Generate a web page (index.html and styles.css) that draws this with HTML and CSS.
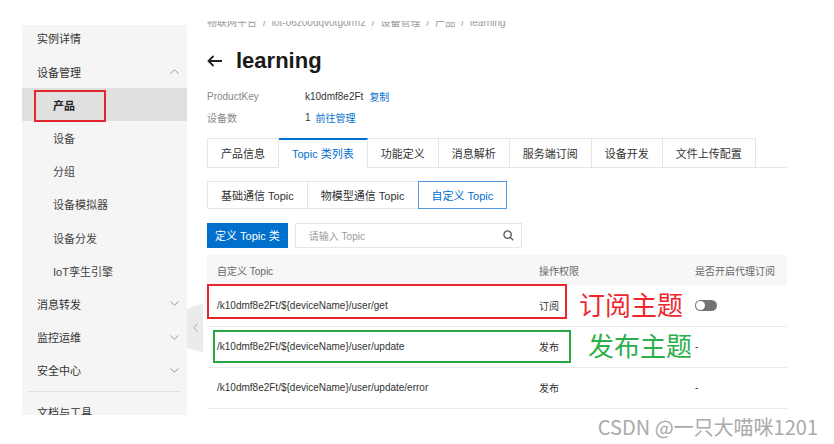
FILE: index.html
```html
<!DOCTYPE html>
<html lang="zh-CN">
<head>
    <meta charset="UTF-8">
    <title>learning - 产品详情</title>
    <link rel="stylesheet" href="styles.css">
</head>
<body>
    <div class="page">
        <aside class="sidebar">
            <div class="nav-item nav-first">实例详情</div>
            <div class="nav-item">设备管理
                <svg class="chev" width="9" height="5" viewBox="0 0 9 5"><path d="M0.5 4.5 L4.5 0.8 L8.5 4.5" /></svg>
            </div>
            <div class="nav-item nav-sub nav-active">产品<span class="mark-nav"></span></div>
            <div class="nav-item nav-sub">设备</div>
            <div class="nav-item nav-sub">分组</div>
            <div class="nav-item nav-sub">设备模拟器</div>
            <div class="nav-item nav-sub">设备分发</div>
            <div class="nav-item nav-sub">IoT孪生引擎</div>
            <div class="nav-item">消息转发
                <svg class="chev" width="9" height="5" viewBox="0 0 9 5"><path d="M0.5 0.5 L4.5 4.2 L8.5 0.5" /></svg>
            </div>
            <div class="nav-item">监控运维
                <svg class="chev" width="9" height="5" viewBox="0 0 9 5"><path d="M0.5 0.5 L4.5 4.2 L8.5 0.5" /></svg>
            </div>
            <div class="nav-item">安全中心
                <svg class="chev" width="9" height="5" viewBox="0 0 9 5"><path d="M0.5 0.5 L4.5 4.2 L8.5 0.5" /></svg>
            </div>
            <div class="nav-divider"></div>
            <div class="nav-item nav-last">文档与工具</div>
        </aside>

        <div class="collapse-tab">
            <svg width="5" height="9" viewBox="0 0 5 9"><path d="M4.5 0.5 L0.8 4.5 L4.5 8.5" /></svg>
        </div>

        <main class="content">
            <div class="crumbs">
                <span>物联网平台</span><span class="sep">/</span>
                <span>iot-06z00dqv0tgorm2</span><span class="sep">/</span>
                <span>设备管理</span><span class="sep">/</span>
                <span>产品</span><span class="sep">/</span>
                <span>learning</span>
            </div>

            <h1 class="title">
                <svg width="16" height="12" viewBox="0 0 16 12"><path d="M15 6 H1.5 M6.5 1 L1.5 6 L6.5 11" /></svg>
                learning
            </h1>

            <div class="info">
                <div class="info-row">
                    <span class="info-label">ProductKey</span>
                    <span class="info-value">k10dmf8e2Ft</span>
                    <a class="link">复制</a>
                </div>
                <div class="info-row">
                    <span class="info-label">设备数</span>
                    <span class="info-value">1</span>
                    <a class="link link-tight">前往管理</a>
                </div>
            </div>

            <div class="tabs">
                <div class="tab">产品信息</div>
                <div class="tab tab-active">Topic 类列表</div>
                <div class="tab">功能定义</div>
                <div class="tab">消息解析</div>
                <div class="tab">服务端订阅</div>
                <div class="tab">设备开发</div>
                <div class="tab">文件上传配置</div>
            </div>

            <div class="subtabs">
                <div class="subtab">基础通信 Topic</div>
                <div class="subtab">物模型通信 Topic</div>
                <div class="subtab subtab-active">自定义 Topic</div>
            </div>

            <div class="toolbar">
                <div class="btn">定义 Topic 类</div>
                <div class="search">
                    <span>请输入 Topic</span>
                    <svg width="11" height="11" viewBox="0 0 11 11"><circle cx="4.6" cy="4.6" r="3.7" /><path d="M7.4 7.4 L10.2 10.2" /></svg>
                </div>
            </div>

            <div class="table">
                <div class="thead">
                    <div class="cell-topic">自定义 Topic</div>
                    <div class="cell-perm">操作权限</div>
                    <div class="cell-proxy">是否开启代理订阅</div>
                </div>
                <div class="row">
                    <div class="cell-topic">/k10dmf8e2Ft/${deviceName}/user/get</div>
                    <div class="cell-perm">订阅<span class="note note-red">订阅主题</span></div>
                    <div class="cell-proxy"><span class="switch"></span></div>
                    <span class="mark mark-red"></span>
                </div>
                <div class="row">
                    <div class="cell-topic">/k10dmf8e2Ft/${deviceName}/user/update</div>
                    <div class="cell-perm">发布<span class="note note-green">发布主题</span></div>
                    <div class="cell-proxy">-</div>
                    <span class="mark mark-green"></span>
                </div>
                <div class="row">
                    <div class="cell-topic">/k10dmf8e2Ft/${deviceName}/user/update/error</div>
                    <div class="cell-perm">发布</div>
                    <div class="cell-proxy">-</div>
                </div>
            </div>
        </main>

        <div class="watermark">CSDN @一只大喵咪1201</div>
    </div>
</body>
</html>
```

FILE: styles.css
```css
/* Global */
body {
    margin: 0;
    background: #fff;
    color: #333;
    font-family: "Liberation Sans", "Noto Sans CJK SC", sans-serif;
}

.page {
    position: relative;
    display: flex;
    align-items: flex-start;
    height: 444px;
    overflow: hidden;
}

/* Sidebar */
.sidebar {
    flex-shrink: 0;
    width: 165px;
    height: 390px;
    margin: 25px 0 0 22px;
    overflow: hidden;
    background: #f5f5f5;
    font-size: 11px;
}

.nav-item {
    position: relative;
    box-sizing: border-box;
    height: 33.2px;
    padding: 0 8px 0 15px;
    display: flex;
    align-items: center;
    justify-content: space-between;
    color: #333;
}

.nav-first {
    height: 30px;
    padding-bottom: 4px;
}

.nav-sub {
    padding-left: 31px;
    color: #444;
}

.nav-active {
    background: #e0e0e0;
    font-weight: bold;
    color: #222;
}

.mark-nav {
    position: absolute;
    left: 12px;
    top: 2px;
    width: 72px;
    height: 32px;
    box-sizing: border-box;
    border: 2px solid #e3262e;
}

.chev path {
    fill: none;
    stroke: #999;
    stroke-width: 1;
}

.nav-divider {
    height: 1px;
    margin: 4px 6px 0;
    background: #e2e2e2;
}

.nav-last {
    height: 40px;
}

/* Collapse handle */
.collapse-tab {
    position: absolute;
    left: 187px;
    top: 303px;
    width: 16px;
    height: 49px;
    display: flex;
    align-items: center;
    justify-content: center;
    background: #ebebeb;
    clip-path: polygon(0 6px, 100% 0, 100% 100%, 0 calc(100% - 4px));
}

.collapse-tab path {
    fill: none;
    stroke: #aaa;
    stroke-width: 1;
}

/* Content */
.content {
    width: 580px;
    padding-left: 20px;
    font-size: 11px;
}

.crumbs {
    height: 8px;
    margin-top: 21px;
    overflow: hidden;
    display: flex;
    align-items: flex-end;
    font-size: 10px;
    line-height: 12px;
    color: #999;
    white-space: nowrap;
}

.crumbs .sep {
    margin: 0 6px;
}

.title {
    margin: 17px 0 0;
    height: 30px;
    display: flex;
    align-items: center;
    gap: 13px;
    font-size: 22px;
    font-weight: bold;
    color: #1a1a1a;
}

.title path {
    fill: none;
    stroke: #222;
    stroke-width: 1.8;
}

.info {
    margin-top: 10px;
    font-size: 10px;
}

.info-row {
    height: 21px;
    display: flex;
    align-items: center;
}

.info-label {
    width: 98px;
    color: #888;
}

.link {
    margin-left: 6px;
    color: #0070cc;
}

.link-tight {
    margin-left: 5px;
}

/* Tabs */
.tabs {
    margin-top: 9.5px;
    height: 29px;
    display: flex;
    border-bottom: 1px solid #e6e6e6;
}

.tab {
    box-sizing: border-box;
    height: 30px;
    padding: 0 13px;
    display: flex;
    align-items: center;
    border: 1px solid #e6e6e6;
    border-left: none;
    background: #fff;
    color: #333;
}

.tab:first-child {
    border-left: 1px solid #e6e6e6;
}

.tab-active {
    border-top: 2px solid #0070cc;
    border-bottom-color: #fff;
    color: #0070cc;
}

.subtabs {
    margin-top: 13px;
    display: flex;
}

.subtab {
    box-sizing: border-box;
    height: 28px;
    padding: 0 13px;
    margin-right: -1px;
    display: flex;
    align-items: center;
    border: 1px solid #e6e6e6;
    color: #333;
}

.subtab-active {
    position: relative;
    border-color: #4f9be6;
    color: #0070cc;
}

/* Toolbar */
.toolbar {
    margin-top: 14px;
    height: 25px;
    display: flex;
    gap: 7px;
}

.btn {
    padding: 0 8px;
    display: flex;
    align-items: center;
    background: #0070cc;
    color: #fff;
}

.search {
    box-sizing: border-box;
    width: 227px;
    padding: 0 7px 0 13px;
    display: flex;
    align-items: center;
    justify-content: space-between;
    border: 1px solid #e6e6e6;
    font-size: 10px;
    color: #999;
}

.search svg {
    fill: none;
    stroke: #555;
    stroke-width: 1.3;
}

/* Table */
.table {
    margin-top: 7px;
    font-size: 10px;
}

.thead {
    height: 31px;
    display: flex;
    align-items: center;
    background: #f7f7f7;
    color: #666;
}

.row {
    position: relative;
    box-sizing: border-box;
    height: 41px;
    display: flex;
    align-items: center;
    border-bottom: 1px solid #ebebeb;
    color: #333;
}

.cell-topic {
    box-sizing: border-box;
    width: 322px;
    padding-left: 10px;
}

.cell-perm {
    box-sizing: border-box;
    width: 156px;
    padding-left: 10px;
    display: flex;
    align-items: center;
    white-space: nowrap;
}

.cell-proxy {
    flex: 1;
    padding-left: 10px;
    display: flex;
    align-items: center;
}

.switch {
    position: relative;
    width: 22px;
    height: 11px;
    border-radius: 6px;
    background: #737373;
}

.switch::after {
    content: "";
    position: absolute;
    left: 1px;
    top: 1px;
    width: 9px;
    height: 9px;
    border-radius: 50%;
    background: #fff;
}

/* Annotations */
.note {
    font-size: 26px;
    line-height: 1;
}

.note-red {
    margin-left: 20px;
    color: #f0282e;
}

.note-green {
    margin-left: 29px;
    color: #2bb04a;
}

.mark {
    position: absolute;
    box-sizing: border-box;
    border: 2px solid;
}

.mark-red {
    left: 0;
    top: -2px;
    width: 360px;
    height: 35px;
    border-color: #e8262d;
}

.mark-green {
    left: 6px;
    top: 3px;
    width: 358px;
    height: 33px;
    border-color: #27a844;
}

.watermark {
    position: absolute;
    right: 16px;
    top: 415px;
    font-size: 20px;
    line-height: 24px;
    color: #aaa;
    font-family: "Noto Sans CJK SC", sans-serif;
}
```
